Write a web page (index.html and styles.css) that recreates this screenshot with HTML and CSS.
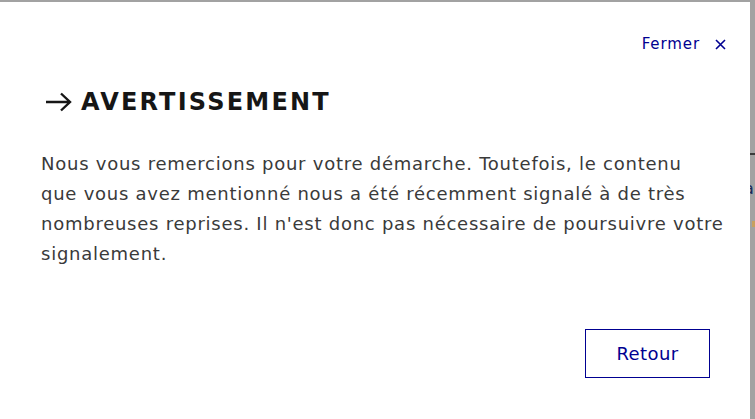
FILE: index.html
```html
<!DOCTYPE html>
<html lang="fr">
<head>
<meta charset="utf-8">
<link rel="stylesheet" href="styles.css">
<title>Avertissement</title>
</head>
<body>
<div class="page">
  <div class="dialog">
    <div class="dialog-header">
      <button class="close-btn">Fermer <span class="close-x"><svg width="11" height="11" viewBox="0 0 11 11"><path d="M1 1L10 10M10 1L1 10" stroke="#000091" stroke-width="1.6" fill="none"/></svg></span></button>
    </div>
    <h1 class="dialog-title"><svg class="title-arrow" width="28" height="20" viewBox="0 0 28 20"><path d="M1 10H25M16 1.5L25 10L16 18.5" stroke="#161616" stroke-width="2.4" fill="none"/></svg>AVERTISSEMENT</h1>
    <p class="dialog-text">Nous vous remercions pour votre démarche. Toutefois, le contenu<br>que vous avez mentionné nous a été récemment signalé à de très<br>nombreuses reprises. Il n'est donc pas nécessaire de poursuivre votre<br>signalement.</p>
    <div class="dialog-footer">
      <button class="btn-secondary">Retour</button>
    </div>
  </div>
  <div class="backdrop">
    <div class="bd-line"></div>
    <div class="bd-text">a</div>
    <div class="bd-orange"></div>
  </div>
</div>
</body>
</html>
```
FILE: styles.css
```css
html, body {
  margin: 0;
  padding: 0;
  background: #a2a2a2;
}
body {
  width: 755px;
  height: 419px;
  overflow: hidden;
  font-family: "DejaVu Sans", "Noto Sans", sans-serif;
}
.page {
  display: flex;
  height: 417px;
  margin-top: 2px;
}
.dialog {
  width: 750px;
  background: #fff;
  box-sizing: border-box;
  padding: 30px 40px 0 41px;
}
.dialog-header {
  display: flex;
  justify-content: flex-end;
  margin-right: -16px;
}
.close-btn {
  border: none;
  background: none;
  padding: 0;
  font-family: inherit;
  font-size: 15px;
  letter-spacing: 0.9px;
  line-height: 24px;
  color: #000091;
  display: flex;
  align-items: center;
  gap: 15px;
}
.close-x {
  display: flex;
}
.dialog-title {
  margin: 30px 0 0 0;
  display: flex;
  align-items: center;
  gap: 8px;
  font-size: 24px;
  line-height: 32px;
  font-weight: 700;
  color: #161616;
  letter-spacing: 2.2px;
}
.title-arrow {
  margin-left: 4px;
  flex: none;
}
.dialog-text {
  margin: 31px -25px 0 0;
  font-size: 18px;
  line-height: 30px;
  letter-spacing: 0.75px;
  color: #3a3a3a;
}
.dialog-footer {
  display: flex;
  justify-content: flex-end;
  margin-top: 60px;
}
.btn-secondary {
  border: 1px solid #000091;
  background: #fff;
  color: #000091;
  font-family: inherit;
  font-size: 18px;
  letter-spacing: 0.4px;
  line-height: 24px;
  width: 125px;
  height: 49px;
  padding: 0;
}
.backdrop {
  flex: 1;
  background: #a2a2a2;
  overflow: hidden;
}
.bd-line {
  height: 2px;
  background: #3c3c3c;
  margin-top: 151px;
}
.bd-text {
  margin-top: 24px;
  font-size: 16px;
  line-height: 20px;
  color: #1b2a5a;
  margin-left: -6px;
}
.bd-orange {
  width: 3px;
  height: 6px;
  margin: 22px 0 0 2px;
  background: #c8a060;
}
```
